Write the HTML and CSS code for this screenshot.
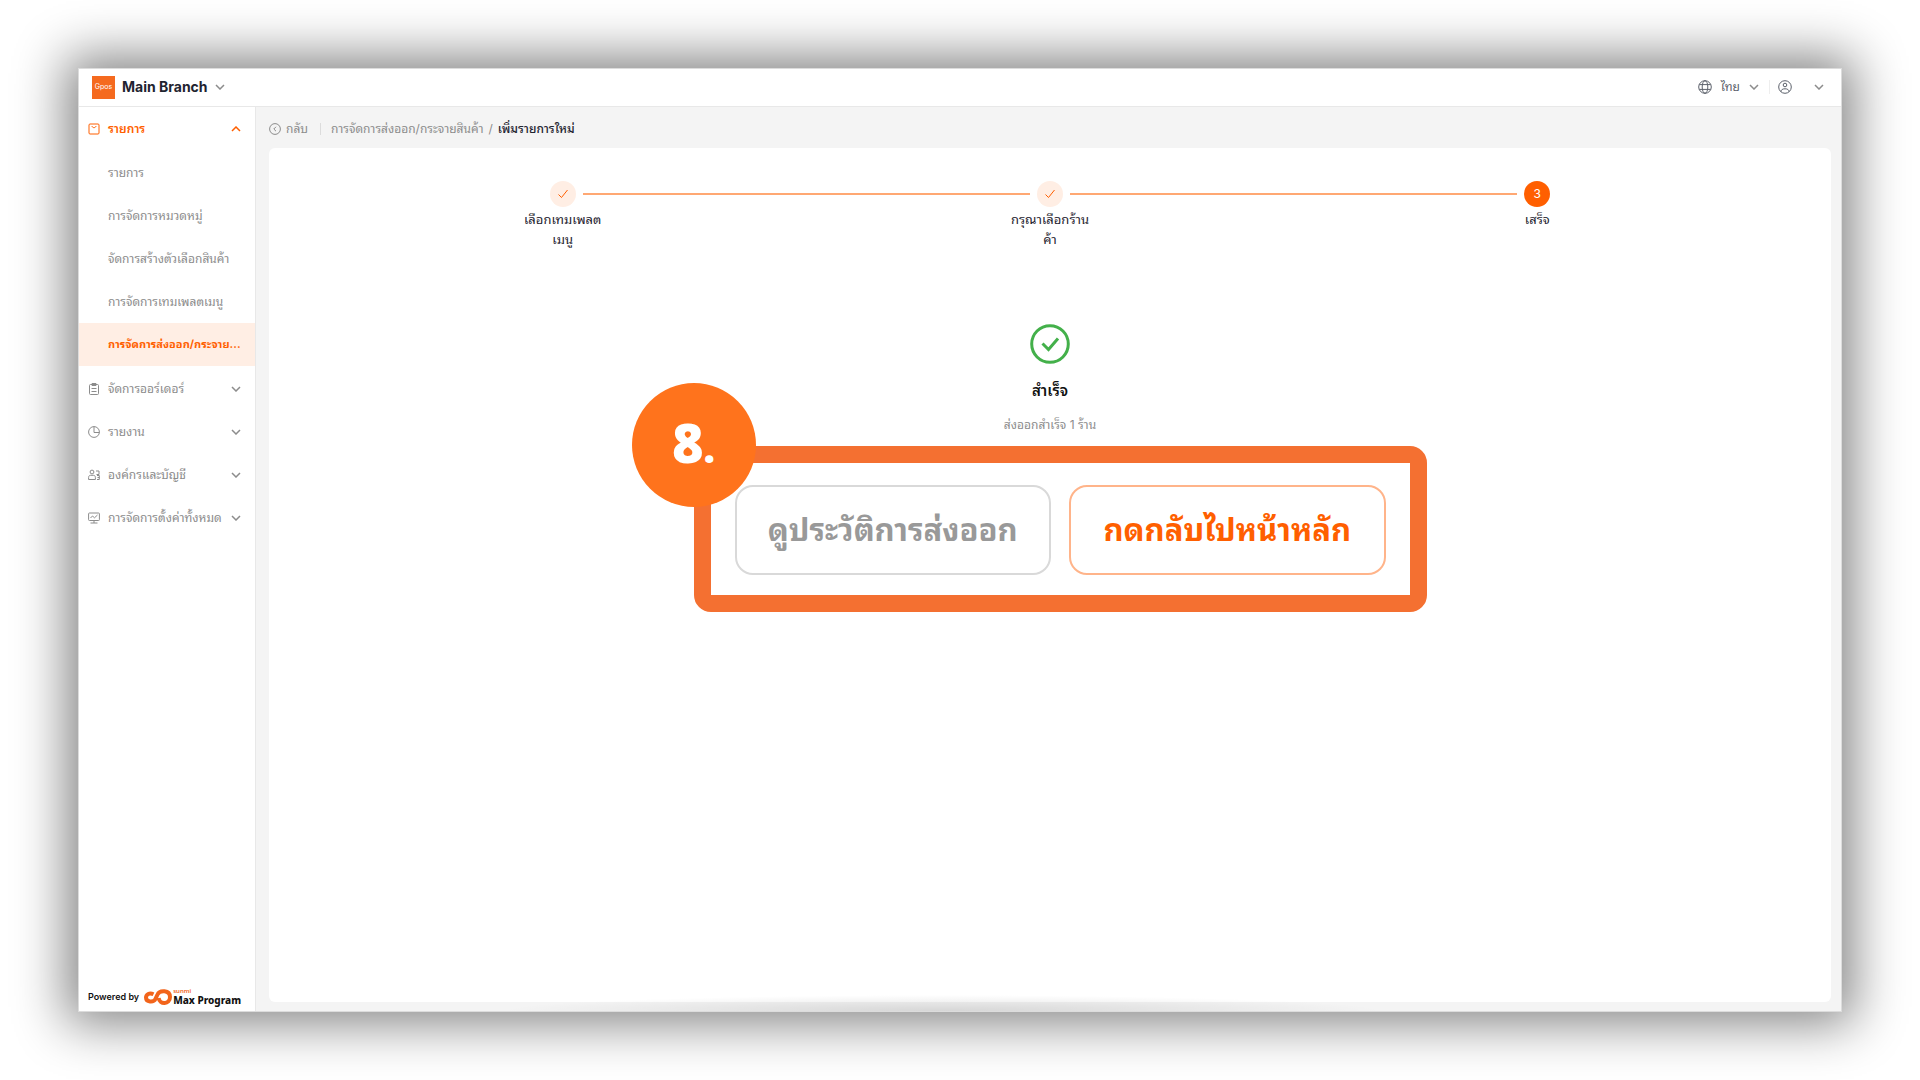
FILE: index.html
```html
<!DOCTYPE html>
<html lang="th">
<head>
<meta charset="utf-8">
<title>Main Branch</title>
<link rel="stylesheet" href="styles.css">
</head>
<body>
<svg class="sprite" aria-hidden="true">
  <symbol id="chevron" viewBox="0 0 10 6"><path d="M1 1l4 4 4-4"/></symbol>
  <symbol id="check" viewBox="0 0 12 10"><path d="M1.500 5.500L4.500 8.500 10.500 1"/></symbol>
</svg>
<div class="window">
  <header class="topbar">
    <button class="branch" type="button">
      <span class="logo">Gpos</span>
      <span class="branch-name">Main Branch</span>
      <svg class="chevron"><use href="#chevron"/></svg>
    </button>
    <div class="tools">
      <button class="tool" type="button">
        <svg class="tool-icon" viewBox="0 0 14 14"><circle cx="7" cy="7" r="6.3"/><ellipse cx="7" cy="7" rx="2.8" ry="6.3"/><path d="M1.3 4.6h11.4M1.3 9.4h11.4"/></svg>
        <span>ไทย</span>
        <svg class="chevron"><use href="#chevron"/></svg>
      </button>
      <button class="tool tool-user" type="button" aria-label="บัญชี">
        <svg class="tool-icon" viewBox="0 0 14 14"><circle cx="7" cy="7" r="6.3"/><circle cx="7" cy="5" r="1.8"/><path d="M3 11.6c.2-2 1.600-2.800 4-2.800s3.800.8 4 2.800"/></svg>
        <svg class="chevron"><use href="#chevron"/></svg>
      </button>
    </div>
  </header>
  <div class="body">
    <aside class="sidebar">
      <nav>
        <ul class="menu">
          <li>
            <button class="group open" type="button">
              <svg class="menu-icon" viewBox="0 0 12 12"><rect x="1" y="1" width="10" height="10" rx="1"/><path d="M4 3c.3 2.200 3.700 2.200 4 0"/></svg>
              <span>รายการ</span>
              <svg class="chevron up"><use href="#chevron"/></svg>
            </button>
            <ul class="submenu">
              <li><a href="#">รายการ</a></li>
              <li><a href="#">การจัดการหมวดหมู่</a></li>
              <li><a href="#">จัดการสร้างตัวเลือกสินค้า</a></li>
              <li><a href="#">การจัดการเทมเพลตเมนู</a></li>
              <li><a class="active" href="#" aria-current="page">การจัดการส่งออก/กระจาย...</a></li>
            </ul>
          </li>
          <li>
            <button class="group" type="button">
              <svg class="menu-icon" viewBox="0 0 12 12"><rect x="1.500" y="1.500" width="9" height="10" rx="1"/><path d="M4 .5h4v2H4zM3.500 5.500h5M3.500 8.500h5"/></svg>
              <span>จัดการออร์เดอร์</span>
              <svg class="chevron"><use href="#chevron"/></svg>
            </button>
          </li>
          <li>
            <button class="group" type="button">
              <svg class="menu-icon" viewBox="0 0 12 12"><circle cx="6" cy="6" r="5.400"/><path d="M6 .6V6.500h5.300"/></svg>
              <span>รายงาน</span>
              <svg class="chevron"><use href="#chevron"/></svg>
            </button>
          </li>
          <li>
            <button class="group" type="button">
              <svg class="menu-icon" viewBox="0 0 12 12"><circle cx="4" cy="3" r="1.900"/><path d="M.6 10.500V8.500c0-1.500.9-2.200 2-2.200h2.800c1.100 0 2 .7 2 2.200v2zM8 2h3v3.500H8.500M9 6.500h2.300v4H9M9.500 8.500h1.800"/></svg>
              <span>องค์กรและบัญชี</span>
              <svg class="chevron"><use href="#chevron"/></svg>
            </button>
          </li>
          <li>
            <button class="group" type="button">
              <svg class="menu-icon" viewBox="0 0 12 12"><rect x=".6" y="1" width="10.800" height="7.500" rx=".8"/><path d="M2.500 6l2-2 2 1.800L9.500 3M6 8.500v2.500M2.500 11h7"/></svg>
              <span>การจัดการตั้งค่าทั้งหมด</span>
              <svg class="chevron"><use href="#chevron"/></svg>
            </button>
          </li>
        </ul>
      </nav>
      <footer class="powered">
        <span>Powered by</span>
        <svg class="sunmi-mark" viewBox="0 0 28 16"><path d="M9.500 5.200C5.500 3.300 2 5.300 2 8.500c0 4.800 7.500 5.300 9.500 1.300l2-4.300C15.500.8 26 .6 26 8c0 7.600-10.500 8-11.300 1"/></svg>
        <span class="brand"><span class="brand-top">sunmi</span><span class="brand-name">Max Program</span></span>
      </footer>
    </aside>
    <main class="main">
      <nav class="crumbs" aria-label="breadcrumb">
        <a class="back" href="#">
          <svg class="back-icon" viewBox="0 0 12 12"><circle cx="6" cy="6" r="5.400"/><path d="M7 3.800L4.800 6 7 8.200"/></svg>
          <span>กลับ</span>
        </a>
        <a class="parent" href="#">การจัดการส่งออก/กระจายสินค้า</a>
        <span class="slash">/</span>
        <span class="current">เพิ่มรายการใหม่</span>
      </nav>
      <section class="card">
        <ol class="steps">
          <li class="step">
            <div class="rail"><span class="line blank"></span><span class="dot"><svg class="check"><use href="#check"/></svg></span><span class="line"></span></div>
            <span class="step-label">เลือกเทมเพลต<br>เมนู</span>
          </li>
          <li class="step">
            <div class="rail"><span class="line"></span><span class="dot"><svg class="check"><use href="#check"/></svg></span><span class="line"></span></div>
            <span class="step-label">กรุณาเลือกร้าน<br>ค้า</span>
          </li>
          <li class="step" aria-current="step">
            <div class="rail"><span class="line"></span><span class="dot now">3</span><span class="line blank"></span></div>
            <span class="step-label">เสร็จ</span>
          </li>
        </ol>
        <div class="result">
          <svg class="result-icon" viewBox="0 0 40 40"><circle cx="20" cy="20" r="18.300"/><path d="M12.500 19.500l6 6 9.500-11"/></svg>
          <h1>สำเร็จ</h1>
          <p>ส่งออกสำเร็จ 1 ร้าน</p>
        </div>
        <div class="callout">
          <span class="badge">8<span class="badge-dot">.</span></span>
          <button class="action" type="button">ดูประวัติการส่งออก</button>
          <button class="action primary" type="button">กดกลับไปหน้าหลัก</button>
        </div>
      </section>
    </main>
  </div>
</div>
</body>
</html>
```
FILE: styles.css
```css
* { box-sizing: border-box; }

body {
  margin: 0;
  min-height: 100vh;
  display: flex;
  padding: 68px 78px;
  background: #fff;
  color: #1f2430;
  font: 12px/20px Inter, "Noto Sans Thai Looped", "Noto Sans Thai", "Noto Sans", sans-serif;
}

button {
  border: 0;
  padding: 0;
  background: none;
  color: inherit;
  font: inherit;
  white-space: nowrap;
  cursor: pointer;
}
a { color: inherit; text-decoration: none; }
ul, ol { list-style: none; margin: 0; padding: 0; }
svg { flex: none; fill: none; stroke: currentColor; }
.sprite { position: absolute; width: 0; height: 0; }

.window {
  position: relative;
  flex: 1;
  display: flex;
  flex-direction: column;
  border: 1px solid #dcdcdc;
  background: #fff;
  box-shadow: 0 0 48px 12px rgba(0, 0, 0, .48);
}
/* soft shade along the bottom edge */
.window::after {
  content: "";
  position: absolute;
  left: 24%;
  right: 26%;
  bottom: 0;
  height: 16px;
  background: radial-gradient(50% 100% at 50% 100%, rgba(0, 0, 0, .12), transparent);
  pointer-events: none;
}

.chevron { width: 10px; height: 6px; stroke-width: 1.5; color: #8c8c8c; }
.up { transform: rotate(180deg); color: #ff5f00; }

.topbar {
  display: flex;
  align-items: center;
  justify-content: space-between;
  height: 38px;
  padding: 0 17px 1px 13px;
  border-bottom: 1px solid #e8e8e8;
}
.branch { display: flex; align-items: center; }
.logo {
  width: 23px;
  height: 23px;
  margin-right: 7px;
  background: #f56a1f;
  color: #fff;
  font-size: 7px;
  line-height: 22px;
  text-align: center;
}
.branch-name { margin-right: 7px; font-size: 14px; font-weight: 700; }
.tools { display: flex; align-items: center; color: #5c616b; }
.tool { display: flex; align-items: center; gap: 9px; padding-right: 10px; }
.tool-icon { width: 14px; height: 14px; }
.tool-user { gap: 22px; padding: 0 0 0 8px; border-left: 1px solid #eee; }

.body { flex: 1; display: flex; }
.sidebar {
  width: 177px;
  display: flex;
  flex-direction: column;
  justify-content: space-between;
  border-right: 1px solid #e8e8e8;
}
.menu { color: #8c8c8c; }
.group {
  display: flex;
  align-items: center;
  gap: 8px;
  width: 100%;
  height: 43px;
  padding: 0 14px 0 9px;
}
.group .chevron { margin-left: auto; }
.menu-icon { width: 12px; height: 12px; }
.open { color: #ff5f00; font-weight: 600; }
.submenu { padding: 1px 0; }
.submenu a { display: block; padding-left: 29px; line-height: 43px; white-space: nowrap; }
.submenu .active { background: #ffeee4; color: #ff5f00; font-size: 11px; font-weight: 700; }

.powered {
  display: flex;
  align-items: center;
  padding: 0 9px 4px;
  color: #111;
  font-size: 9px;
  font-weight: 600;
  white-space: nowrap;
}
.sunmi-mark { width: 28px; height: 16px; margin: 0 1px 0 5px; color: #f2641b; stroke-width: 4; }
.brand { display: flex; flex-direction: column; font-family: "Noto Sans", sans-serif; }
.brand-top { color: #f2641b; font-size: 6px; line-height: 6px; }
.brand-name { font-size: 10px; line-height: 12px; font-weight: 800; }

.main {
  flex: 1;
  display: flex;
  flex-direction: column;
  padding: 0 10px 9px 13px;
  background: #f4f4f4;
}
.crumbs { display: flex; align-items: center; height: 41px; padding-top: 3px; color: #8c8c8c; }
.back { display: flex; align-items: center; gap: 5px; padding-right: 12px; }
.back-icon { width: 12px; height: 12px; }
.parent { padding-left: 10px; border-left: 1px solid #dcdcdc; line-height: 12px; }
.slash { margin: 0 5px; }
.current { color: #1f2430; font-weight: 500; }

.card { flex: 1; border-radius: 6px; background: #fff; }
.steps { display: flex; padding: 33px 50px 0; }
.step { flex: 1; text-align: center; }
.rail { display: flex; align-items: center; gap: 7px; }
.line { flex: 1; height: 2px; background: #ffa873; }
.blank { background: none; }
.dot {
  display: flex;
  align-items: center;
  justify-content: center;
  width: 26px;
  height: 26px;
  border-radius: 50%;
  background: #ffeee4;
  color: #ff5f00;
}
.now { background: #ff5f00; color: #fff; }
.check { width: 12px; height: 10px; }
.step-label { display: block; padding-top: 2px; font-size: 13px; }

.result { display: flex; flex-direction: column; align-items: center; padding-top: 75px; }
.result-icon { width: 40px; height: 40px; color: #43b04a; stroke-width: 3; }
.result h1 { margin: 17px 0 14px; color: #111; font-size: 15px; line-height: 20px; font-weight: 600; }
.result p { margin: 0; color: #8c8c8c; }

.callout {
  position: relative;
  display: flex;
  gap: 18px;
  width: 733px;
  margin: 11px auto 0;
  left: 10px;
  padding: 22px 24px 20px;
  border: 17px solid #f47031;
  border-radius: 17px;
}
.action {
  flex: 1;
  height: 90px;
  border: 2px solid #d9d9d9;
  border-radius: 18px;
  color: #999;
  font-size: 31px;
  font-weight: 700;
}
.primary { border-color: #ffb48a; color: #ff5f00; }
.badge {
  position: absolute;
  left: -79px;
  top: -80px;
  width: 124px;
  height: 124px;
  border-radius: 50%;
  background: #ff731c;
  color: #fff;
  font: 800 54px/118px "Open Sans", sans-serif;
  text-align: center;
}
.badge-dot { font-size: 40px; }
```
